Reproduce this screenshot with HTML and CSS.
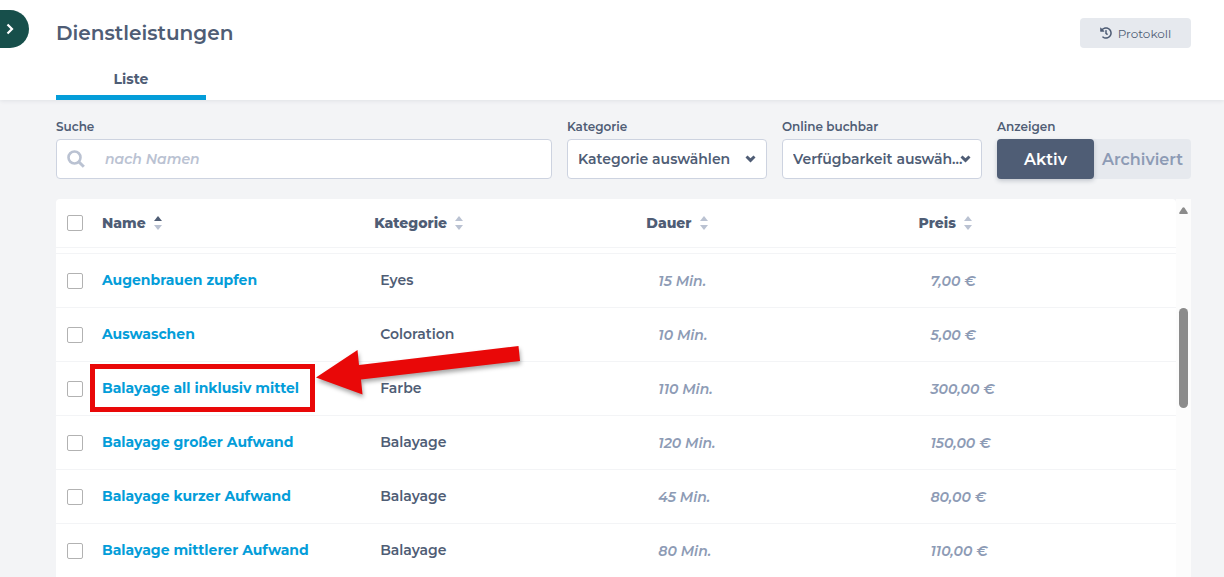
FILE: index.html
```html
<!DOCTYPE html>
<html lang="de">
<head>
<meta charset="utf-8">
<meta name="viewport" content="width=device-width, initial-scale=1">
<title>Dienstleistungen</title>
<link rel="stylesheet" href="styles.css">
</head>
<body>
<svg class="sprite" aria-hidden="true">
  <symbol id="sort" viewBox="0 0 8 14"><path class="sort-up" d="M4 0 8 5H0Z"/><path class="sort-down" d="M0 9h8L4 14Z"/></symbol>
</svg>
<header class="topbar">
  <button class="menu-toggle" aria-label="Menü öffnen"><svg width="8" height="12" viewBox="0 0 8 12"><path d="M1.5 1.5 6 6l-4.500 4.500" fill="none" stroke="currentColor" stroke-width="2.200"/></svg></button>
  <div class="title-row">
    <h1>Dienstleistungen</h1>
    <button class="log-button"><svg width="12" height="12" viewBox="0 0 512 512"><path fill="currentColor" d="M504 255.500c.3 136.600-111.200 248.400-247.800 248.500-59 0-113.200-20.500-155.800-54.900-11.100-8.900-11.900-25.500-1.800-35.600l11.300-11.300c8.600-8.600 22.400-9.600 31.900-2C173.100 425.100 212.800 440 256 440c101.700 0 184-82.300 184-184 0-101.700-82.300-184-184-184-48.800 0-93.100 19-126.100 49.900l50.800 50.800c10.100 10.100 2.900 27.300-11.300 27.300H24c-8.800 0-16-7.200-16-16V38.600c0-14.300 17.200-21.400 27.300-11.300l49.400 49.400C129.200 34.100 189.600 8 256 8c136.800 0 247.700 110.800 248 247.500zM323.100 334.900l9.800-12.600c8.100-10.500 6.300-25.500-4.200-33.700L288 256.300V152c0-13.300-10.700-24-24-24h-16c-13.300 0-24 10.700-24 24v135.700l65.400 50.900c10.500 8.100 25.500 6.300 33.700-4.200z"/></svg>Protokoll</button>
  </div>
  <nav class="tabs"><a class="tab" href="#liste" aria-current="page">Liste</a></nav>
</header>
<main>
  <form class="filters">
    <div class="field field-search">
      <label for="search">Suche</label>
      <div class="control">
        <svg class="search-icon" width="18" height="18" viewBox="0 0 18 18"><g fill="none" stroke="currentColor"><circle cx="7.500" cy="7.500" r="6" stroke-width="2.600"/><path d="m12 12 4.800 4.800" stroke-width="3"/></g></svg>
        <input id="search" type="text" placeholder="nach Namen">
      </div>
    </div>
    <div class="field">
      <label for="category">Kategorie</label>
      <div class="control">
        <select id="category"><option>Kategorie auswählen</option></select>
        <svg class="chevron" width="11" height="8" viewBox="0 0 10 8"><path d="M0 2.500 2 .5l3 2.800L8 .5l2 2L5 7.500Z" fill="currentColor"/></svg>
      </div>
    </div>
    <div class="field">
      <label for="online">Online buchbar</label>
      <div class="control">
        <select id="online"><option>Verfügbarkeit auswäh...</option></select>
        <svg class="chevron" width="11" height="8" viewBox="0 0 10 8"><path d="M0 2.500 2 .5l3 2.800L8 .5l2 2L5 7.500Z" fill="currentColor"/></svg>
      </div>
    </div>
    <div class="field field-toggle">
      <span class="label" id="show-label">Anzeigen</span>
      <div class="toggle" role="group" aria-labelledby="show-label">
        <button type="button" class="active" aria-pressed="true">Aktiv</button>
        <button type="button" aria-pressed="false">Archiviert</button>
      </div>
    </div>
  </form>
  <section class="panel">
    <table>
      <colgroup><col class="col-check"><col class="col-data"><col class="col-data"><col class="col-data"><col></colgroup>
      <thead>
        <tr>
          <th><input type="checkbox" aria-label="Alle auswählen"></th>
          <th>Name<svg class="sort sorted"><use href="#sort"/></svg></th>
          <th>Kategorie<svg class="sort"><use href="#sort"/></svg></th>
          <th>Dauer<svg class="sort"><use href="#sort"/></svg></th>
          <th>Preis<svg class="sort"><use href="#sort"/></svg></th>
        </tr>
      </thead>
      <tbody>
        <tr class="row-edge"><td colspan="5"></td></tr>
        <tr><td><input type="checkbox" aria-label="Augenbrauen zupfen"></td><td class="name"><a href="#1">Augenbrauen zupfen</a></td><td class="category">Eyes</td><td class="value">15 Min.</td><td class="value">7,00 €</td></tr>
        <tr><td><input type="checkbox" aria-label="Auswaschen"></td><td class="name"><a href="#2">Auswaschen</a></td><td class="category">Coloration</td><td class="value">10 Min.</td><td class="value">5,00 €</td></tr>
        <tr><td><input type="checkbox" aria-label="Balayage all inklusiv mittel"></td><td class="name"><a href="#3">Balayage all inklusiv mittel</a></td><td class="category">Farbe</td><td class="value">110 Min.</td><td class="value">300,00 €</td></tr>
        <tr><td><input type="checkbox" aria-label="Balayage großer Aufwand"></td><td class="name"><a href="#4">Balayage großer Aufwand</a></td><td class="category">Balayage</td><td class="value">120 Min.</td><td class="value">150,00 €</td></tr>
        <tr><td><input type="checkbox" aria-label="Balayage kurzer Aufwand"></td><td class="name"><a href="#5">Balayage kurzer Aufwand</a></td><td class="category">Balayage</td><td class="value">45 Min.</td><td class="value">80,00 €</td></tr>
        <tr><td><input type="checkbox" aria-label="Balayage mittlerer Aufwand"></td><td class="name"><a href="#6">Balayage mittlerer Aufwand</a></td><td class="category">Balayage</td><td class="value">80 Min.</td><td class="value">110,00 €</td></tr>
      </tbody>
    </table>
    <div class="scrollbar" aria-hidden="true">
      <svg width="9" height="7" viewBox="0 0 9 7"><path d="M1 7Q-.3 6.600.4 5.400L3.500.8Q4.500-.4 5.500.8L8.600 5.400Q9.300 6.600 8 7Z" fill="#8b8b8b"/></svg>
      <div class="thumb"></div>
    </div>
  </section>
</main>
<div class="highlight"></div>
<svg class="arrow" width="216" height="60" viewBox="0 0 216 60" aria-hidden="true"><path d="M1 37.500 42.500 10l1.500 15L203.500 6l1.500 15L46 39.500 47.500 54.500Z" fill="#e90808"/></svg>
</body>
</html>
```

FILE: styles.css
```css
* { box-sizing: border-box; }

body {
  margin: 0;
  height: 100vh;
  display: flex;
  flex-direction: column;
  position: relative;
  overflow: hidden;
  background: #f3f4f6;
  color: #4f5d75;
  font-family: Montserrat, Inter, sans-serif;
  font-size: 14px;
  font-weight: 600;
}

button, input, select { font: inherit; color: inherit; margin: 0; }
button { border: 0; cursor: pointer; }
.sprite { position: absolute; width: 0; height: 0; }

.topbar {
  position: relative;
  padding: 18px 33px 0 56px;
  background: #fff;
  box-shadow: 0 1px 4px rgba(60, 70, 90, 0.1);
}

.menu-toggle {
  position: absolute;
  left: 0;
  top: 10px;
  width: 29px;
  height: 38px;
  padding: 0 0 0 6px;
  display: flex;
  align-items: center;
  border-radius: 0 19px 19px 0;
  background: #174f4b;
  color: #fff;
}

.title-row { display: flex; justify-content: space-between; align-items: center; height: 30px; }
h1 { margin: 0; font-size: 20px; line-height: 30px; font-weight: 600; }

.log-button {
  width: 111px;
  height: 30px;
  display: flex;
  align-items: center;
  justify-content: center;
  gap: 6px;
  padding: 0;
  border-radius: 4px;
  background: #e6e9ee;
  font-size: 12px;
  font-weight: 400;
}

.tabs { display: flex; padding-top: 14px; }
.tab {
  width: 150px;
  height: 38px;
  line-height: 34px;
  border-bottom: 5px solid #049dd9;
  color: inherit;
  text-align: center;
  text-decoration: none;
  font-weight: 700;
}

main { flex: 1; min-height: 0; display: flex; flex-direction: column; padding: 19px 33px 0 56px; }

.filters { display: flex; gap: 15px; }
.field { width: 200px; }
.field-search { flex: 1; }
.field-toggle { width: 194px; }
label, .label { display: block; height: 20px; line-height: 16px; font-size: 12px; }
.control { position: relative; }
.control input, .control select {
  display: block;
  width: 100%;
  height: 40px;
  border: 1px solid #cdd3e0;
  border-radius: 4px;
  background: #fff;
  appearance: none;
}
.control input { padding: 0 16px 0 48px; }
.control input::placeholder { color: #bac2d2; font-style: italic; opacity: 1; }
.control select { padding: 0 10px; }
.search-icon { position: absolute; left: 11px; top: 11px; color: #bac2d2; }
.chevron { position: absolute; right: 11px; top: 16px; pointer-events: none; }

.toggle { display: flex; height: 40px; border-radius: 4px; background: #e6e9ee; }
.toggle button {
  flex: 1;
  padding: 0;
  border-radius: 4px;
  background: none;
  color: #8d9bb5;
  font-size: 16px;
  font-weight: 600;
}
.toggle .active { background: #4f5d75; color: #fff; box-shadow: 0 2px 4px rgba(60, 70, 90, 0.25); }

.panel { flex: 1; min-height: 0; display: flex; align-items: stretch; margin-top: 20px; overflow: hidden; }
table {
  flex: 1;
  align-self: flex-start;
  table-layout: fixed;
  border-collapse: separate;
  border-spacing: 0;
  border-radius: 4px 4px 0 0;
  background: #fff;
}
.col-check { width: 38px; }
.col-data { width: 24.3%; }
th, td { padding: 0 8px; border-bottom: 1px solid #f3f4f6; text-align: left; white-space: nowrap; }
th { height: 49px; font-weight: 800; }
td { height: 54px; }
.row-edge td { height: 6px; }
th:first-child, td:first-child { padding: 0 0 0 11px; }
td.name, td.category { padding-bottom: 2px; }
td a { color: #049dd9; font-weight: 700; text-decoration: none; }
td.category { padding-left: 14px; }
td.value { padding-left: 20px; color: #8d9bb5; font-style: italic; }

input[type="checkbox"] {
  display: block;
  width: 16px;
  height: 16px;
  appearance: none;
  border: 1px solid #b2b2b2;
  border-radius: 2px;
  background: #fff;
}

.sort { width: 8px; height: 14px; margin-left: 8px; vertical-align: -2px; fill: #bac2d2; color: #bac2d2; }
.sort.sorted { color: #4f5d75; }
.sort-up { fill: currentColor; }

.scrollbar { width: 15px; padding-top: 8px; display: flex; flex-direction: column; align-items: center; background: #fcfcfc; }
.thumb { width: 9px; height: 100px; margin-top: 94px; border-radius: 5px; background: #8b8b8b; }

.highlight { position: absolute; left: 90px; top: 364px; width: 225px; height: 48px; border: 5px solid #e90808; }
.arrow { position: absolute; left: 315px; top: 340px; filter: drop-shadow(1px 3px 2px rgba(0, 0, 0, 0.35)); }
```
